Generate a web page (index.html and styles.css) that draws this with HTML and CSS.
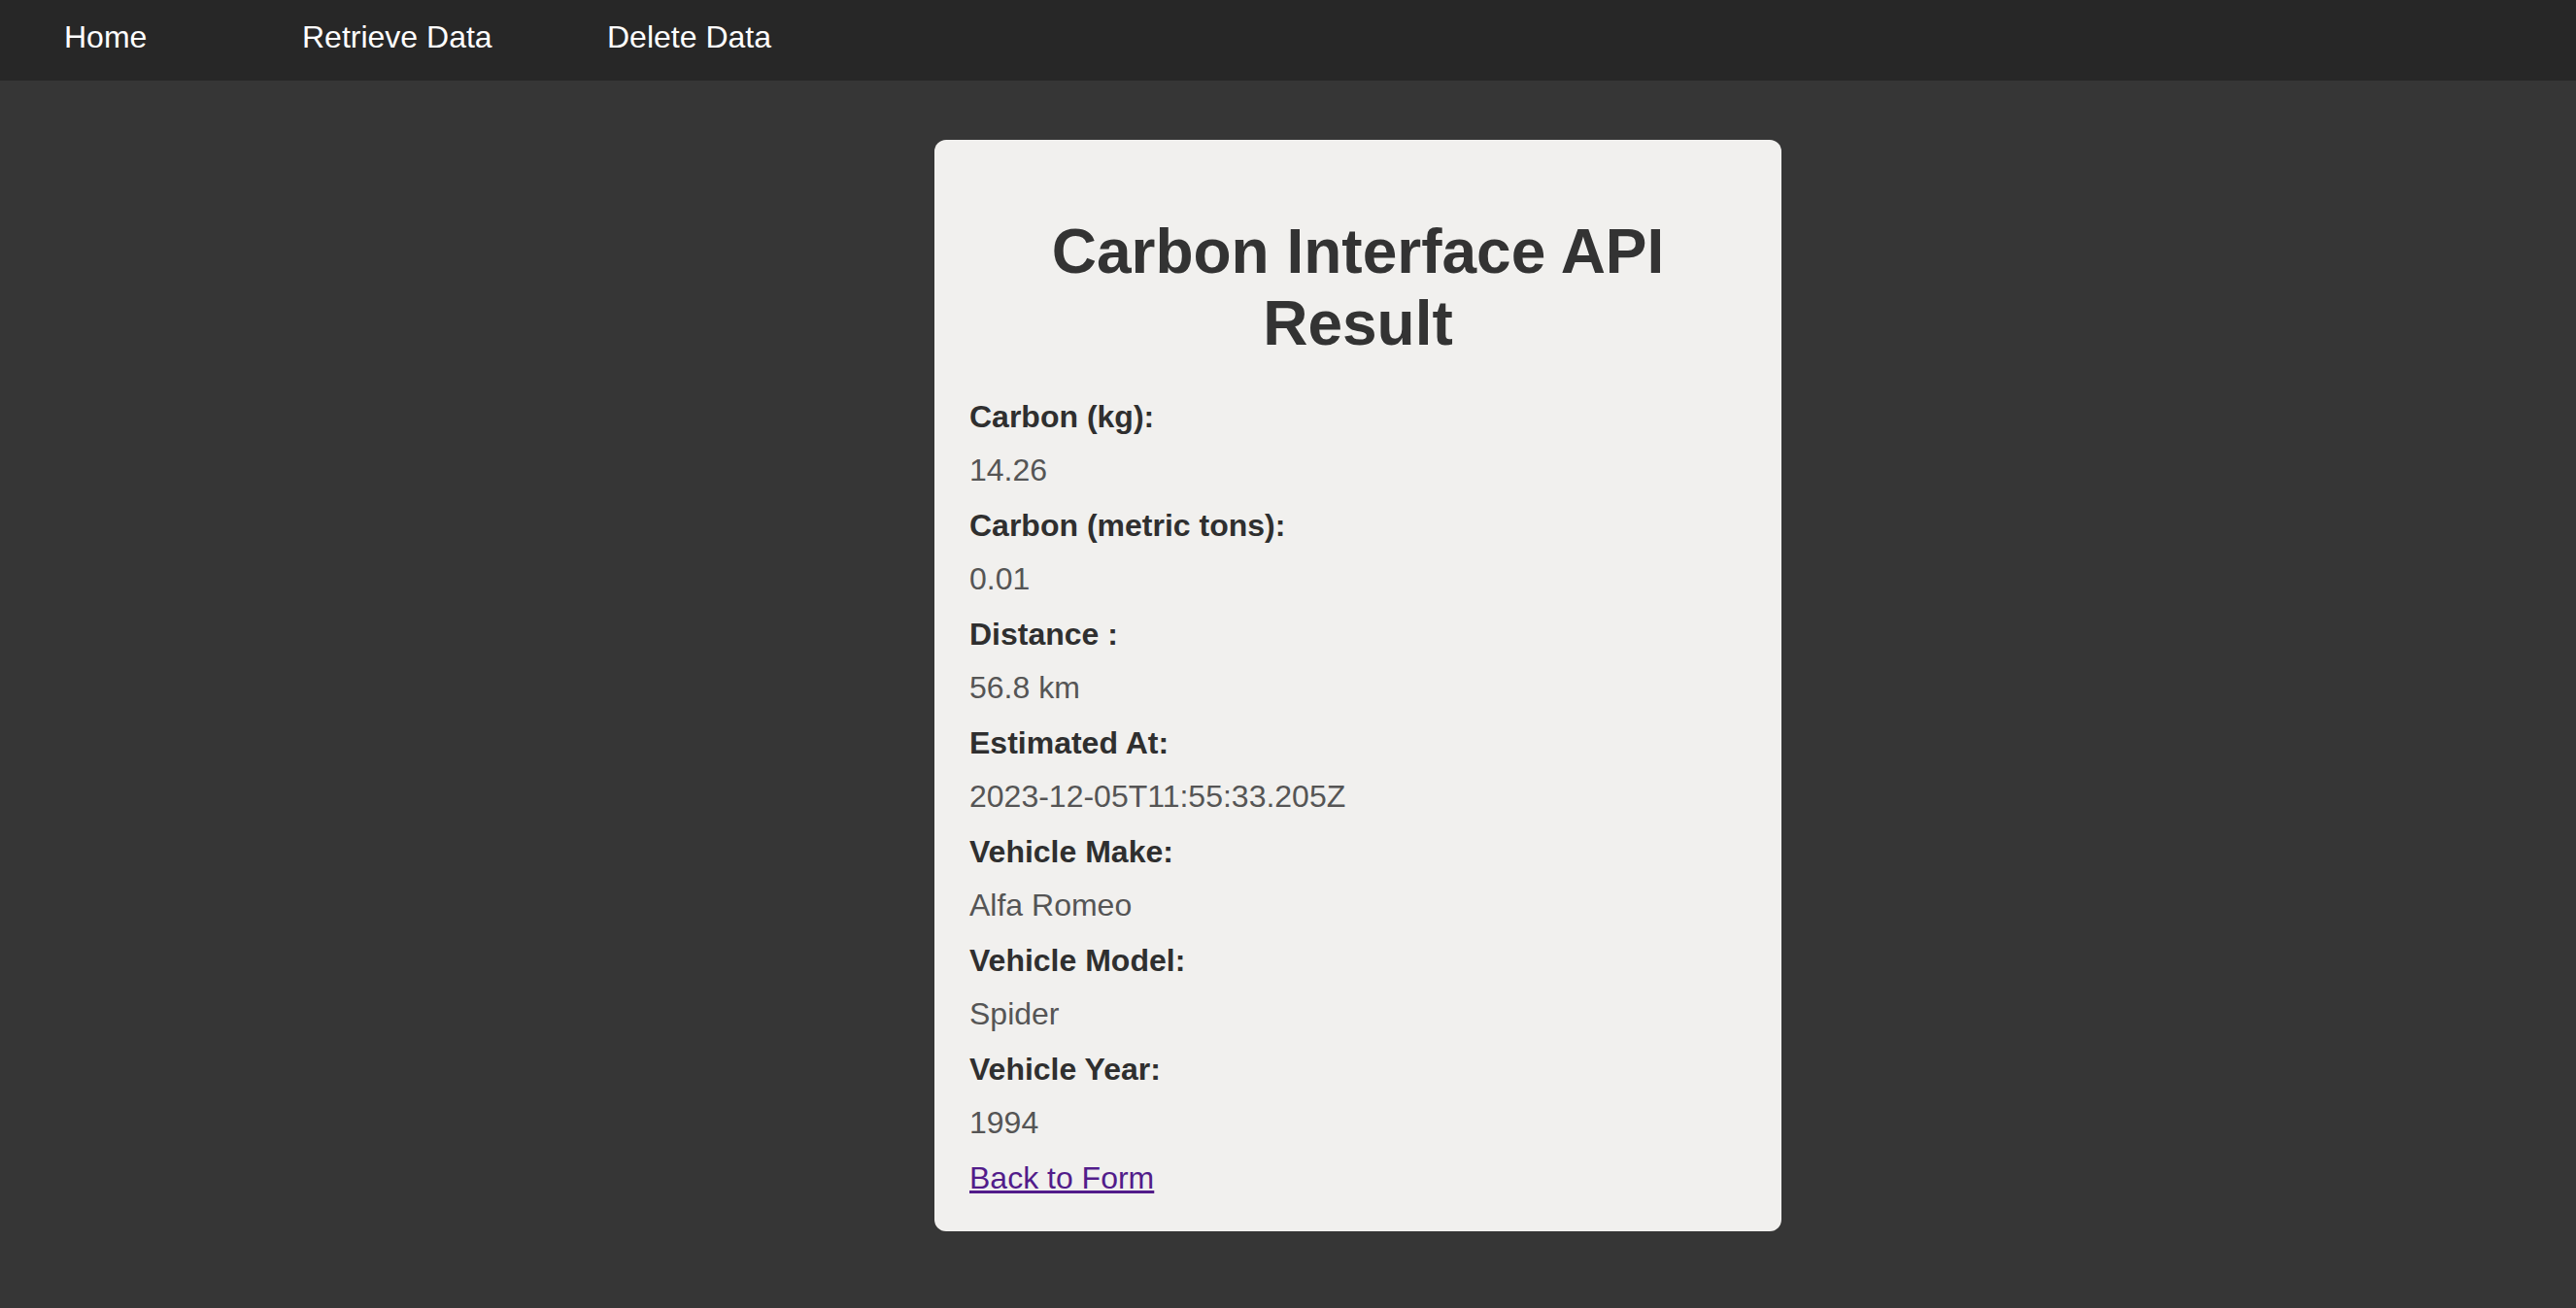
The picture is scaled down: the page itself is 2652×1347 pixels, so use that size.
FILE: index.html
```html
<!DOCTYPE html>
<html lang="en">
<head>
<meta charset="utf-8">
<title>Carbon Interface API Result</title>
<link rel="stylesheet" href="styles.css">
</head>
<body>
<nav class="topnav">
  <a class="nav-link" href="#">Home</a>
  <a class="nav-link" href="#">Retrieve Data</a>
  <a class="nav-link" href="#">Delete Data</a>
</nav>
<main class="page">
  <section class="card">
    <h1 class="card-title">Carbon Interface API Result</h1>
    <p class="label">Carbon (kg):</p>
    <p class="value">14.26</p>
    <p class="label">Carbon (metric tons):</p>
    <p class="value">0.01</p>
    <p class="label">Distance :</p>
    <p class="value">56.8 km</p>
    <p class="label">Estimated At:</p>
    <p class="value">2023-12-05T11:55:33.205Z</p>
    <p class="label">Vehicle Make:</p>
    <p class="value">Alfa Romeo</p>
    <p class="label">Vehicle Model:</p>
    <p class="value">Spider</p>
    <p class="label">Vehicle Year:</p>
    <p class="value">1994</p>
    <a class="back-link" href="#">Back to Form</a>
  </section>
</main>
</body>
</html>
```

FILE: styles.css
```css
html, body {
  margin: 0;
  padding: 0;
}

body {
  background: #363636;
  font-family: "Liberation Sans", Arial, sans-serif;
  font-size: 32px;
  min-height: 1347px;
}

.topnav {
  background: #272727;
  height: 83px;
  box-sizing: border-box;
  padding: 20px 0 26px 66px;
  display: grid;
  grid-template-columns: 245px 314px auto;
  align-items: start;
}

.nav-link {
  color: #ffffff;
  text-decoration: none;
  line-height: 37px;
  justify-self: start;
}

.page {
  display: flex;
  justify-content: center;
  padding: 61px 0 0 144px;
}

.card {
  width: 872px;
  box-sizing: border-box;
  background: #f1f0ee;
  border-radius: 12px;
  padding: 36px 36px 36px 36px;
}

.card-title {
  font-size: 64px;
  font-weight: bold;
  color: #333333;
  text-align: center;
  line-height: 73.5px;
  margin: 43px 0 41px;
}

.label {
  margin: 0 0 18px;
  line-height: 37px;
  font-weight: bold;
  color: #2f2f2f;
}

.value {
  margin: 0 0 20px;
  line-height: 37px;
  color: #555555;
}

.back-link {
  display: block;
  width: max-content;
  line-height: 37px;
  color: #521c8a;
  text-decoration: underline;
}
```
